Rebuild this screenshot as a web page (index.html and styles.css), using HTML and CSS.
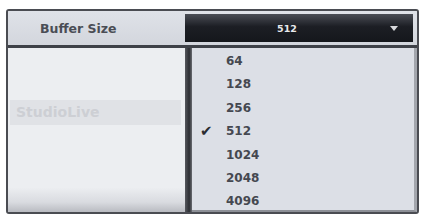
FILE: index.html
```html
<!DOCTYPE html>
<html lang="en">

<head>
    <meta charset="UTF-8">
    <title>Buffer Size</title>
    <link rel="stylesheet" href="styles.css">
</head>

<body>
    <div class="frame">
        <div class="header">
            <div class="label">Buffer Size</div>
            <div class="select">
                <span class="value">512</span>
                <span class="arrow"></span>
            </div>
        </div>
        <div class="main">
            <div class="panel">
                <div class="device">StudioLive</div>
            </div>
            <div class="divider"></div>
            <ul class="list">
                <li>64</li>
                <li>128</li>
                <li>256</li>
                <li class="checked">512</li>
                <li>1024</li>
                <li>2048</li>
                <li>4096</li>
            </ul>
        </div>
    </div>
</body>

</html>
```
FILE: styles.css
```css
* {
    margin: 0;
    padding: 0;
    box-sizing: border-box;
}

body {
    background-color: #ffffff;
    font-family: "DejaVu Sans", Verdana, sans-serif;
}

.frame {
    margin: 9px 0 0 6px;
    width: 413px;
    height: 205px;
    border: 2px solid #4a4c52;
    border-radius: 3px;
    display: flex;
    flex-direction: column;
    background-color: #e8eaee;
    overflow: hidden;
}

.header {
    height: 37px;
    display: flex;
    background: linear-gradient(#dfe2e8, #d3d6dd);
    border-bottom: 3px solid #3e4148;
}

.label {
    width: 177px;
    padding-left: 32px;
    padding-top: 10px;
    font-size: 12.5px;
    font-weight: bold;
    color: #4a4d55;
}

.select {
    flex: 1;
    margin: 3px 4px 3px 0;
    background: linear-gradient(#4a4d55, #1c1e24 45%, #15171c);
    display: flex;
    align-items: center;
    justify-content: center;
    position: relative;
}

.value {
    color: #e8e9ec;
    font-size: 9.5px;
    font-weight: bold;
    margin-right: 24px;
}

.arrow {
    position: absolute;
    right: 15px;
    top: 12px;
    border-left: 4px solid transparent;
    border-right: 4px solid transparent;
    border-top: 5px solid #d8d9dd;
}

.main {
    flex: 1;
    display: flex;
    overflow: hidden;
}

.panel {
    width: 177px;
    padding-top: 52px;
    background: linear-gradient(#eceef1 85%, #d9dbe0 94%, #b9bbc1);
}

.device {
    margin: 0 4px 0 2px;
    height: 25px;
    padding-left: 6px;
    line-height: 25px;
    font-size: 14px;
    font-weight: bold;
    color: #cdcfd4;
    background-color: #e0e2e6;
}

.divider {
    width: 7px;
    background: linear-gradient(90deg, #55575d, #2c2e33 60%, #6a6c72);
}

.list {
    flex: 1;
    list-style: none;
    padding-top: 2px;
    background-color: #dcdfe6;
    border-right: 3px solid #a3a6ad;
    border-bottom: 2px solid #8d9097;
    overflow: hidden;
}

.list li {
    height: 23.4px;
    line-height: 23.4px;
    padding-left: 34px;
    font-size: 12px;
    font-weight: bold;
    color: #454850;
    position: relative;
}

.list li.checked::before {
    content: "\2714";
    position: absolute;
    left: 8px;
    font-size: 15px;
    color: #2a2c31;
}
```
